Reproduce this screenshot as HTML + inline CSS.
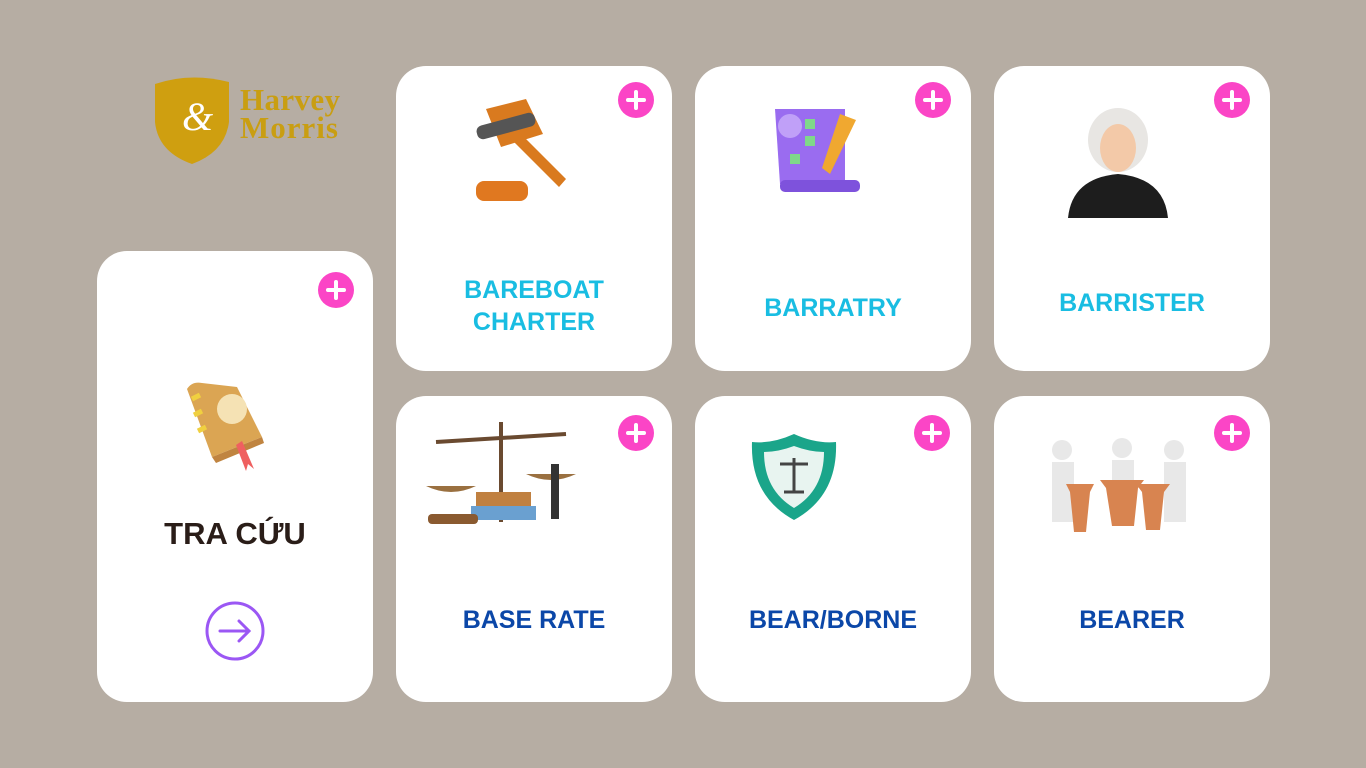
<!DOCTYPE html>
<html><head><meta charset="utf-8"><style>
body{margin:0;width:1366px;height:768px;background:#b6ada3;position:relative;overflow:hidden;font-family:"Liberation Sans","Noto Sans CJK SC",sans-serif}
.card{position:absolute;background:#fff;border-radius:30px}
.plus{position:absolute;width:36px;height:36px;border-radius:50%;background:#fb45c6}
.plus:before,.plus:after{content:"";position:absolute;background:#fff;border-radius:2px}
.plus:before{left:8px;top:16px;width:20px;height:4px}
.plus:after{left:16px;top:8px;width:4px;height:20px}
.t{position:absolute;left:0;right:0;text-align:center;font-weight:bold;font-size:25px;line-height:32px;letter-spacing:0}
.c{color:#19bde2}.b{color:#0b47a8}
</style></head><body>
<svg style="position:absolute;left:150px;top:72px" width="200" height="95">
<path d="M5 12 Q40 0 79 10 L79 50 Q75 80 42 92 Q8 80 5 50Z" fill="#cf9f10"/>
<text x="32" y="58" font-family="Liberation Serif" font-style="italic" font-size="40" fill="#fff">&amp;</text>
<text x="90" y="38" font-family="Liberation Serif" font-weight="bold" font-size="31" fill="#c99e12" textLength="100">Harvey</text>
<text x="90" y="66" font-family="Liberation Serif" font-weight="bold" font-size="31" fill="#c99e12" textLength="98">Morris</text>
</svg>

<div class="card" style="left:97px;top:251px;width:276px;height:451px">
<div class="plus" style="left:221px;top:21px"></div>
<svg style="position:absolute;left:85px;top:128px" width="90" height="96"><path d="M5 10 Q10 2 20 4 L55 8 L80 58 L30 78 Z" fill="#dba553"/><path d="M30 78 L80 58 L82 64 L34 84Z" fill="#c08440"/><circle cx="50" cy="30" r="15" fill="#f5e2b4"/><path d="M60 62 L72 90 L66 85 L64 92 L54 66Z" fill="#ef6060"/><path d="M10 20 L18 16 M12 36 L20 32 M16 52 L24 48" stroke="#f0d040" stroke-width="5"/></svg>
<div class="t" style="top:263px;color:#2a1d18;font-size:31px;line-height:40px">TRA CỨU</div>
<svg style="position:absolute;left:108px;top:350px" width="60" height="60"><circle cx="30" cy="30" r="28" fill="none" stroke="#9b57f4" stroke-width="3"/><path d="M15 30 H44 M34 20 L44 30 L34 40" fill="none" stroke="#9b57f4" stroke-width="3" stroke-linecap="round"/></svg>
</div>

<div class="card" style="left:396px;top:66px;width:276px;height:305px">
<div class="plus" style="left:222px;top:16px"></div>
<svg style="position:absolute;left:75px;top:33px" width="100" height="106"><rect x="5" y="82" width="52" height="20" rx="8" fill="#e07820"/><path d="M15 10 L55 0 L72 35 L30 48 Z" fill="#d97a1f"/><path d="M45 30 L95 80 L88 88 L38 38Z" fill="#d97a1f"/><rect x="5" y="20" width="60" height="14" rx="6" fill="#555" transform="rotate(-15 35 27)"/></svg>
<div class="t c" style="top:208px">BAREBOAT<br>CHARTER</div>
</div>

<div class="card" style="left:695px;top:66px;width:276px;height:305px">
<div class="plus" style="left:220px;top:16px"></div>
<svg style="position:absolute;left:75px;top:38px" width="95" height="90"><path d="M5 5 H75 V80 H10 Z" fill="#9a6cf0"/><rect x="10" y="76" width="80" height="12" rx="5" fill="#7e52dc"/><circle cx="20" cy="22" r="12" fill="#c0a0f8"/><rect x="35" y="15" width="10" height="10" fill="#7fd88a"/><rect x="35" y="32" width="10" height="10" fill="#7fd88a"/><rect x="20" y="50" width="10" height="10" fill="#7fd88a"/><path d="M70 10 L86 16 L60 70 L52 64Z" fill="#f0a830"/></svg>
<div class="t c" style="top:226px">BARRATRY</div>
</div>

<div class="card" style="left:994px;top:66px;width:276px;height:305px">
<div class="plus" style="left:220px;top:16px"></div>
<svg style="position:absolute;left:72px;top:40px" width="104" height="112"><path d="M2 112 Q6 72 52 68 Q98 72 102 112Z" fill="#1d1d1d"/><ellipse cx="52" cy="34" rx="30" ry="32" fill="#e8e6e3"/><ellipse cx="52" cy="42" rx="18" ry="24" fill="#f3c9a8"/></svg>
<div class="t c" style="top:221px">BARRISTER</div>
</div>

<div class="card" style="left:396px;top:396px;width:276px;height:306px">
<div class="plus" style="left:222px;top:19px"></div>
<svg style="position:absolute;left:30px;top:18px" width="160" height="118"><rect x="73" y="8" width="4" height="100" fill="#6a4a30"/><path d="M10 28 L140 20" stroke="#6a4a30" stroke-width="4"/><path d="M0 72 Q25 84 50 72Z" fill="#9a7040"/><path d="M100 60 Q125 72 150 60Z" fill="#9a7040"/><rect x="50" y="78" width="55" height="14" fill="#c08040"/><rect x="45" y="92" width="65" height="14" fill="#6aa0d0"/><rect x="2" y="100" width="50" height="10" rx="4" fill="#8a5a30"/><rect x="125" y="50" width="8" height="55" fill="#333"/></svg>
<div class="t b" style="top:208px">BASE RATE</div>
</div>

<div class="card" style="left:695px;top:396px;width:276px;height:306px">
<div class="plus" style="left:219px;top:19px"></div>
<svg style="position:absolute;left:55px;top:36px" width="88" height="90"><path d="M44 2 Q66 12 86 10 Q88 64 44 88 Q0 64 2 10 Q22 12 44 2Z" fill="#1aa58a"/><path d="M44 14 Q60 20 74 20 Q74 58 44 76 Q14 58 14 20 Q28 20 44 14Z" fill="#e8f4f0"/><path d="M44 26 V60 M30 32 H58 M34 60 H54" stroke="#444" stroke-width="3"/></svg>
<div class="t b" style="top:208px">BEAR/BORNE</div>
</div>

<div class="card" style="left:994px;top:396px;width:276px;height:306px">
<div class="plus" style="left:220px;top:19px"></div>
<svg style="position:absolute;left:52px;top:40px" width="145" height="100"><g fill="#e8e8e8"><circle cx="16" cy="14" r="10"/><circle cx="76" cy="12" r="10"/><circle cx="128" cy="14" r="10"/><rect x="6" y="26" width="22" height="60"/><rect x="66" y="24" width="22" height="40"/><rect x="118" y="26" width="22" height="60"/></g><g fill="#d88450"><path d="M20 48 H48 L44 56 L40 96 H28 L24 56Z"/><path d="M54 44 H98 L92 52 L88 90 H66 L60 52Z"/><path d="M90 48 H124 L118 56 L114 94 H100 L96 56Z"/></g></svg>
<div class="t b" style="top:208px">BEARER</div>
</div>
</body></html>
